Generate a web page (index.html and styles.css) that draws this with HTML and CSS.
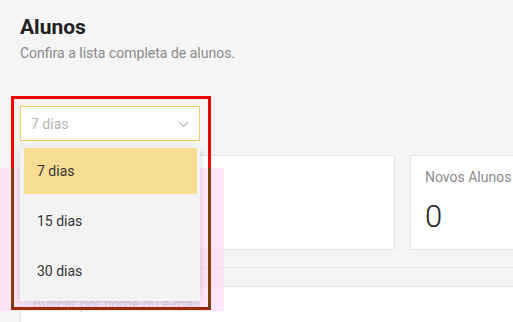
FILE: index.html
```html
<!DOCTYPE html>
<html lang="pt-BR">
<head>
  <meta charset="UTF-8">
  <meta name="viewport" content="width=device-width, initial-scale=1.0">
  <title>Alunos</title>
  <link rel="stylesheet" href="styles.css">
</head>
<body>
  <div class="page">
    <h1>Alunos</h1>
    <p class="subtitle">Confira a lista completa de alunos.</p>

    <div class="filter">
      <div class="select">
        <span class="select-value">7 dias</span>
        <svg class="chevron" width="11" height="7" viewBox="0 0 11 7"><polyline points="1,1 5.5,5.5 10,1" fill="none" stroke="#bdbdbd" stroke-width="1.2"/></svg>
      </div>
      <ul class="options">
        <li class="option active">7 dias</li>
        <li class="option">15 dias</li>
        <li class="option">30 dias</li>
      </ul>
    </div>

    <div class="cards">
      <div class="card"></div>
      <div class="card">
        <div class="card-label">Novos Alunos</div>
        <div class="card-value">0</div>
      </div>
    </div>

    <hr class="divider">

    <div class="search">Buscar por nome ou e-mail</div>
  </div>

  <!-- highlight overlays -->
  <div class="mark-pink"></div>
  <div class="mark-top"></div>
  <div class="mark-bottom"></div>
</body>
</html>
```

FILE: styles.css
```css
body {
  margin: 0;
  background: #f5f5f5;
  font-family: Roboto, "Noto Sans", sans-serif;
  overflow: hidden;
  height: 322px;
  position: relative;
}
.page {
  padding: 0 0 0 20px;
  height: 322px;
  overflow: hidden;
}
h1 {
  margin: 15px 0 0;
  font-size: 21px;
  line-height: 25px;
  font-weight: 700;
  color: #222;
}
.subtitle {
  margin: 3px 0 0;
  font-size: 14px;
  line-height: 20px;
  color: #8a8a8a;
}
.filter {
  position: relative;
  width: 180px;
  margin-top: 43px;
}
.select {
  box-sizing: border-box;
  height: 35px;
  border: 1px solid #f2cc66;
  background: #fff;
  display: flex;
  align-items: center;
  justify-content: space-between;
  padding: 0 10px;
}
.select-value {
  font-size: 14px;
  color: #b4b4b4;
}
.chevron {
  margin-top: 1px;
}
.options {
  position: absolute;
  top: 41px;
  left: 0;
  width: 180px;
  box-sizing: border-box;
  margin: 0;
  padding: 1px 3px 3px 4px;
  list-style: none;
  background: #f3f3f3;
  box-shadow: 0 2px 8px rgba(0, 0, 0, 0.15);
  z-index: 5;
}
.option {
  height: 46px;
  margin-bottom: 4px;
  display: flex;
  align-items: center;
  padding-left: 13px;
  font-size: 14px;
  color: #333;
}
.option.active {
  background: #f7dc93;
}
.cards {
  display: grid;
  grid-template-columns: 375px 375px;
  gap: 15px;
  margin-top: 14px;
}
.card {
  box-sizing: border-box;
  height: 95px;
  background: #fff;
  border: 1px solid #e3e3e3;
  padding: 12px 14px;
}
.card-label {
  font-size: 14px;
  line-height: 18px;
  color: #8c8c8c;
}
.card-value {
  margin-top: 13px;
  font-size: 31px;
  font-weight: 300;
  line-height: 36px;
  color: #222;
}
.divider {
  margin: 17px 0 0;
  border: 0;
  border-top: 1px solid #e3e3e3;
}
.search {
  margin-top: 18px;
  width: 520px;
  height: 40px;
  box-sizing: border-box;
  background: #fff;
  border: 1px solid #e3e3e3;
  padding: 9px 12px;
  font-size: 14px;
  color: #c4c4c4;
}
.mark-pink {
  position: absolute;
  left: 0;
  top: 168px;
  width: 224px;
  height: 143px;
  background: rgba(255, 215, 245, 0.6);
  z-index: 3;
}
.mark-top {
  position: absolute;
  left: 11px;
  top: 96px;
  width: 200px;
  height: 72px;
  box-sizing: border-box;
  border: 3px solid #f00;
  border-bottom: 0;
  z-index: 6;
}
.mark-bottom {
  position: absolute;
  left: 11px;
  top: 168px;
  width: 200px;
  height: 142px;
  box-sizing: border-box;
  border: 3px solid #7d3f12;
  border-top: 0;
  border-bottom-color: #9b2a10;
  z-index: 6;
}
```
